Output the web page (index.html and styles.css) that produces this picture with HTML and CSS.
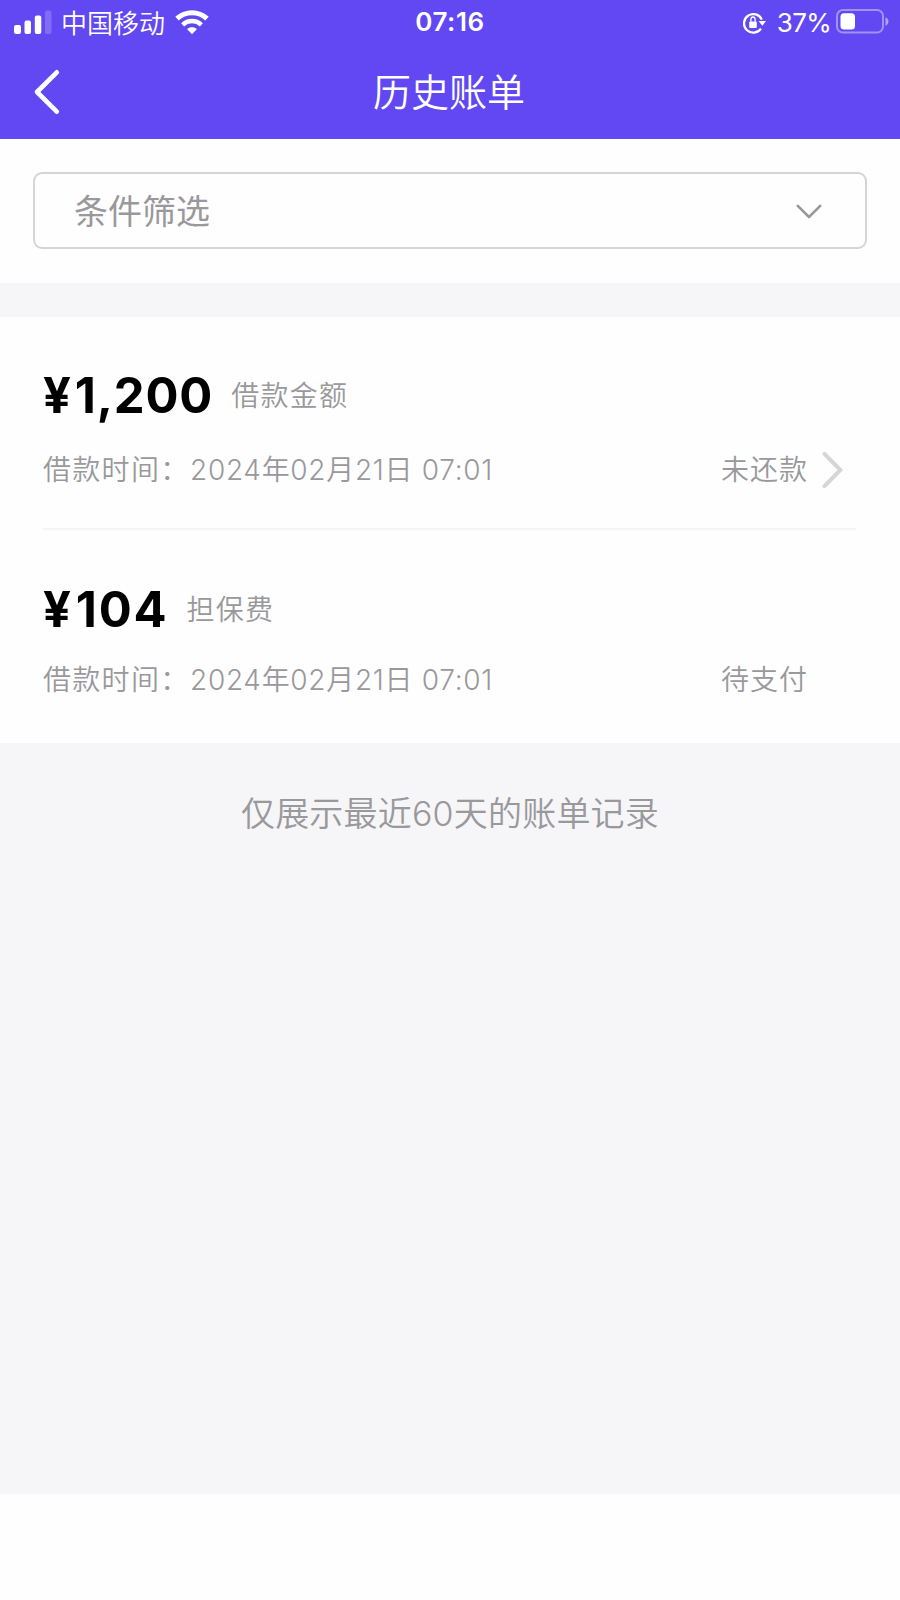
FILE: index.html
```html
<!DOCTYPE html>
<html lang="zh-CN">
<head>
    <meta charset="UTF-8">
    <title>历史账单</title>
    <link rel="stylesheet" href="styles.css">
</head>
<body>

<header class="header">
    <div class="status-bar">
        <div class="status-left">
            <svg class="signal" width="38" height="24" viewBox="0 0 38 24">
                <rect x="0" y="15" width="7" height="9" rx="2" fill="#fff"/>
                <rect x="10.5" y="10.5" width="6.5" height="13.5" rx="2" fill="#fff"/>
                <rect x="20.8" y="5.5" width="6.5" height="18.5" rx="2" fill="#fff"/>
                <rect x="31" y="0.5" width="6.5" height="23.5" rx="2" fill="#fff" opacity=".2"/>
            </svg>
            <span class="carrier">中国移动</span>
            <svg class="wifi" width="34" height="26" viewBox="0 0 34 26">
                <path d="M2 9.6C10.4 1.7 23.6 1.7 32 9.6" fill="none" stroke="#fff" stroke-width="5"/>
                <path d="M7.6 15.8C13 10.8 21 10.8 26.4 15.8" fill="none" stroke="#fff" stroke-width="4.4"/>
                <path d="M12.2 20.2C14.8 17.6 19.2 17.6 21.8 20.2L17 25.2Z" fill="#fff"/>
            </svg>
        </div>
        <div class="clock">07:16</div>
        <div class="status-right">
            <svg class="rotation" width="24" height="24" viewBox="0 0 24 24">
                <path d="M19 17.6A9.3 9.3 0 1 1 19.8 8.6" fill="none" stroke="#fff" stroke-width="2.2"/>
                <path d="M16.6 10H24L20.3 14.8Z" fill="#fff"/>
                <rect x="7.2" y="10.4" width="7.6" height="6.6" rx="1" fill="#fff"/>
                <path d="M8.9 10.8V8.4a2.1 2.4 0 0 1 4.2 0V10.8" fill="none" stroke="#fff" stroke-width="1.3"/>
            </svg>
            <span class="percent">37%</span>
            <svg class="battery" width="54" height="26" viewBox="0 0 54 26">
                <rect x="1" y="2" width="46" height="22.6" rx="6" fill="none" stroke="#fff" stroke-width="2" opacity=".4"/>
                <rect x="4.5" y="5.2" width="14.5" height="16.2" rx="3.5" fill="#fff"/>
                <path d="M49.5 9.3C53.4 10.5 53.4 16.5 49.5 17.7Z" fill="#fff" opacity=".5"/>
            </svg>
        </div>
    </div>
    <nav class="nav-bar">
        <svg class="back" width="30" height="48" viewBox="0 0 30 48">
            <path d="M24.8 4.3L5 24L24.8 43.7" fill="none" stroke="#fff" stroke-width="4.6" stroke-linecap="round" stroke-linejoin="round"/>
        </svg>
        <h1 class="title">历史账单</h1>
    </nav>
</header>

<section class="filter">
    <div class="filter-box">
        <span>条件筛选</span>
        <svg width="26" height="16" viewBox="0 0 26 16">
            <path d="M1.8 1.8L13 13L24.2 1.8" fill="none" stroke="#99999b" stroke-width="2.6" stroke-linecap="round" stroke-linejoin="round"/>
        </svg>
    </div>
</section>

<main class="content">
    <div class="bills">
        <div class="bill">
            <div class="bill-top">
                <span class="amount"><span class="yen">¥</span>1,200</span>
                <span class="label">借款金额</span>
            </div>
            <div class="bill-info">
                <span class="info-label">借款时间：</span>
                <span class="date">2024年02月21日 07:01</span>
                <span class="state">未还款</span>
                <svg class="arrow" width="22" height="38" viewBox="0 0 22 38">
                    <path d="M2.5 2.8L18.4 19L2.5 35.2" fill="none" stroke="#d6d6d8" stroke-width="4" stroke-linecap="round"/>
                </svg>
            </div>
        </div>
        <div class="bill">
            <div class="bill-top">
                <span class="amount"><span class="yen">¥</span>104</span>
                <span class="label">担保费</span>
            </div>
            <div class="bill-info">
                <span class="info-label">借款时间：</span>
                <span class="date">2024年02月21日 07:01</span>
                <span class="state">待支付</span>
            </div>
        </div>
    </div>
    <p class="note">仅展示最近60天的账单记录</p>
</main>

</body>
</html>
```
FILE: styles.css
```css
* {
    box-sizing: border-box;
}

body {
    margin: 0;
    background: #fefefe;
    color: #99989b;
    font-family: Inter, "Noto Sans CJK SC", sans-serif;
}

svg {
    display: block;
    flex: none;
}

.header {
    height: 139px;
    background: #6148f3;
    color: #fff;
}

.status-bar {
    display: grid;
    grid-template-columns: 1fr auto 1fr;
    align-items: center;
    height: 45px;
    padding: 0 10px;
    font-size: 26px;
    line-height: 43px;
}

.status-left,
.status-right {
    display: flex;
    align-items: center;
    height: 43px;
}

.status-right {
    justify-content: flex-end;
}

.signal {
    margin-left: 4px;
    margin-top: -1px;
}

.carrier {
    margin: 0 10px 0 9px;
    padding-top: 1px;
    font-weight: 350;
}

.wifi {
    margin-top: -2px;
}

.clock {
    height: 45px;
    font-weight: 600;
    letter-spacing: 0.6px;
}

.rotation {
    margin-right: 11px;
}

.percent {
    letter-spacing: -0.7px;
}

.battery {
    margin-left: 5px;
    margin-top: -3px;
}

.nav-bar {
    display: grid;
    grid-template-columns: 60px 1fr 62px;
    align-items: center;
    height: 94px;
    padding: 0 32px;
}

.title {
    margin: 0;
    font-size: 38px;
    font-weight: 350;
    line-height: 94px;
    text-align: center;
}

.filter {
    height: 144px;
    padding: 33px 33px 0;
}

.filter-box {
    display: flex;
    align-items: center;
    justify-content: space-between;
    height: 77px;
    padding: 2px 43px 0 39px;
    border: 2px solid #d5d5d7;
    border-radius: 9px;
    font-size: 34px;
    line-height: 75px;
}

.content {
    height: 1211px;
    padding-top: 34px;
    background: #f6f5f8;
}

.bills {
    background: #fefefe;
}

.bill {
    margin: 0 44px 0 43px;
    padding-top: 49px;
}

.bill:first-child {
    padding: 48px 0 38px;
    border-bottom: 2px solid #f5f4f7;
}

.bill:last-child {
    padding-bottom: 43px;
}

.bill-top {
    display: flex;
    align-items: center;
    gap: 18px;
    line-height: 60px;
}

.amount {
    color: #000;
    font-size: 49px;
    font-weight: 700;
    letter-spacing: 0.8px;
}

.bill:last-child .amount {
    letter-spacing: 1.8px;
}

.amount .yen {
    margin-right: 3px;
}

.label {
    padding-top: 1px;
    font-size: 28px;
    font-weight: 350;
    letter-spacing: 1.3px;
}

.bill-info {
    display: flex;
    align-items: center;
    margin-top: 24px;
    font-size: 28px;
    font-weight: 350;
    line-height: 40px;
    white-space: nowrap;
}

.bill:last-child .bill-info {
    margin-top: 20px;
}

.info-label {
    width: 147px;
    letter-spacing: 1.3px;
}

.date {
    flex: 1;
    letter-spacing: 0.7px;
}

.state {
    width: 101px;
    letter-spacing: 1px;
}

.bill:last-child .state {
    width: 135px;
}

.arrow {
    margin-right: 12px;
}

.note {
    margin: 0;
    padding-top: 46px;
    font-size: 34px;
    font-weight: 350;
    letter-spacing: 0.2px;
    line-height: 50px;
    text-align: center;
}
```
